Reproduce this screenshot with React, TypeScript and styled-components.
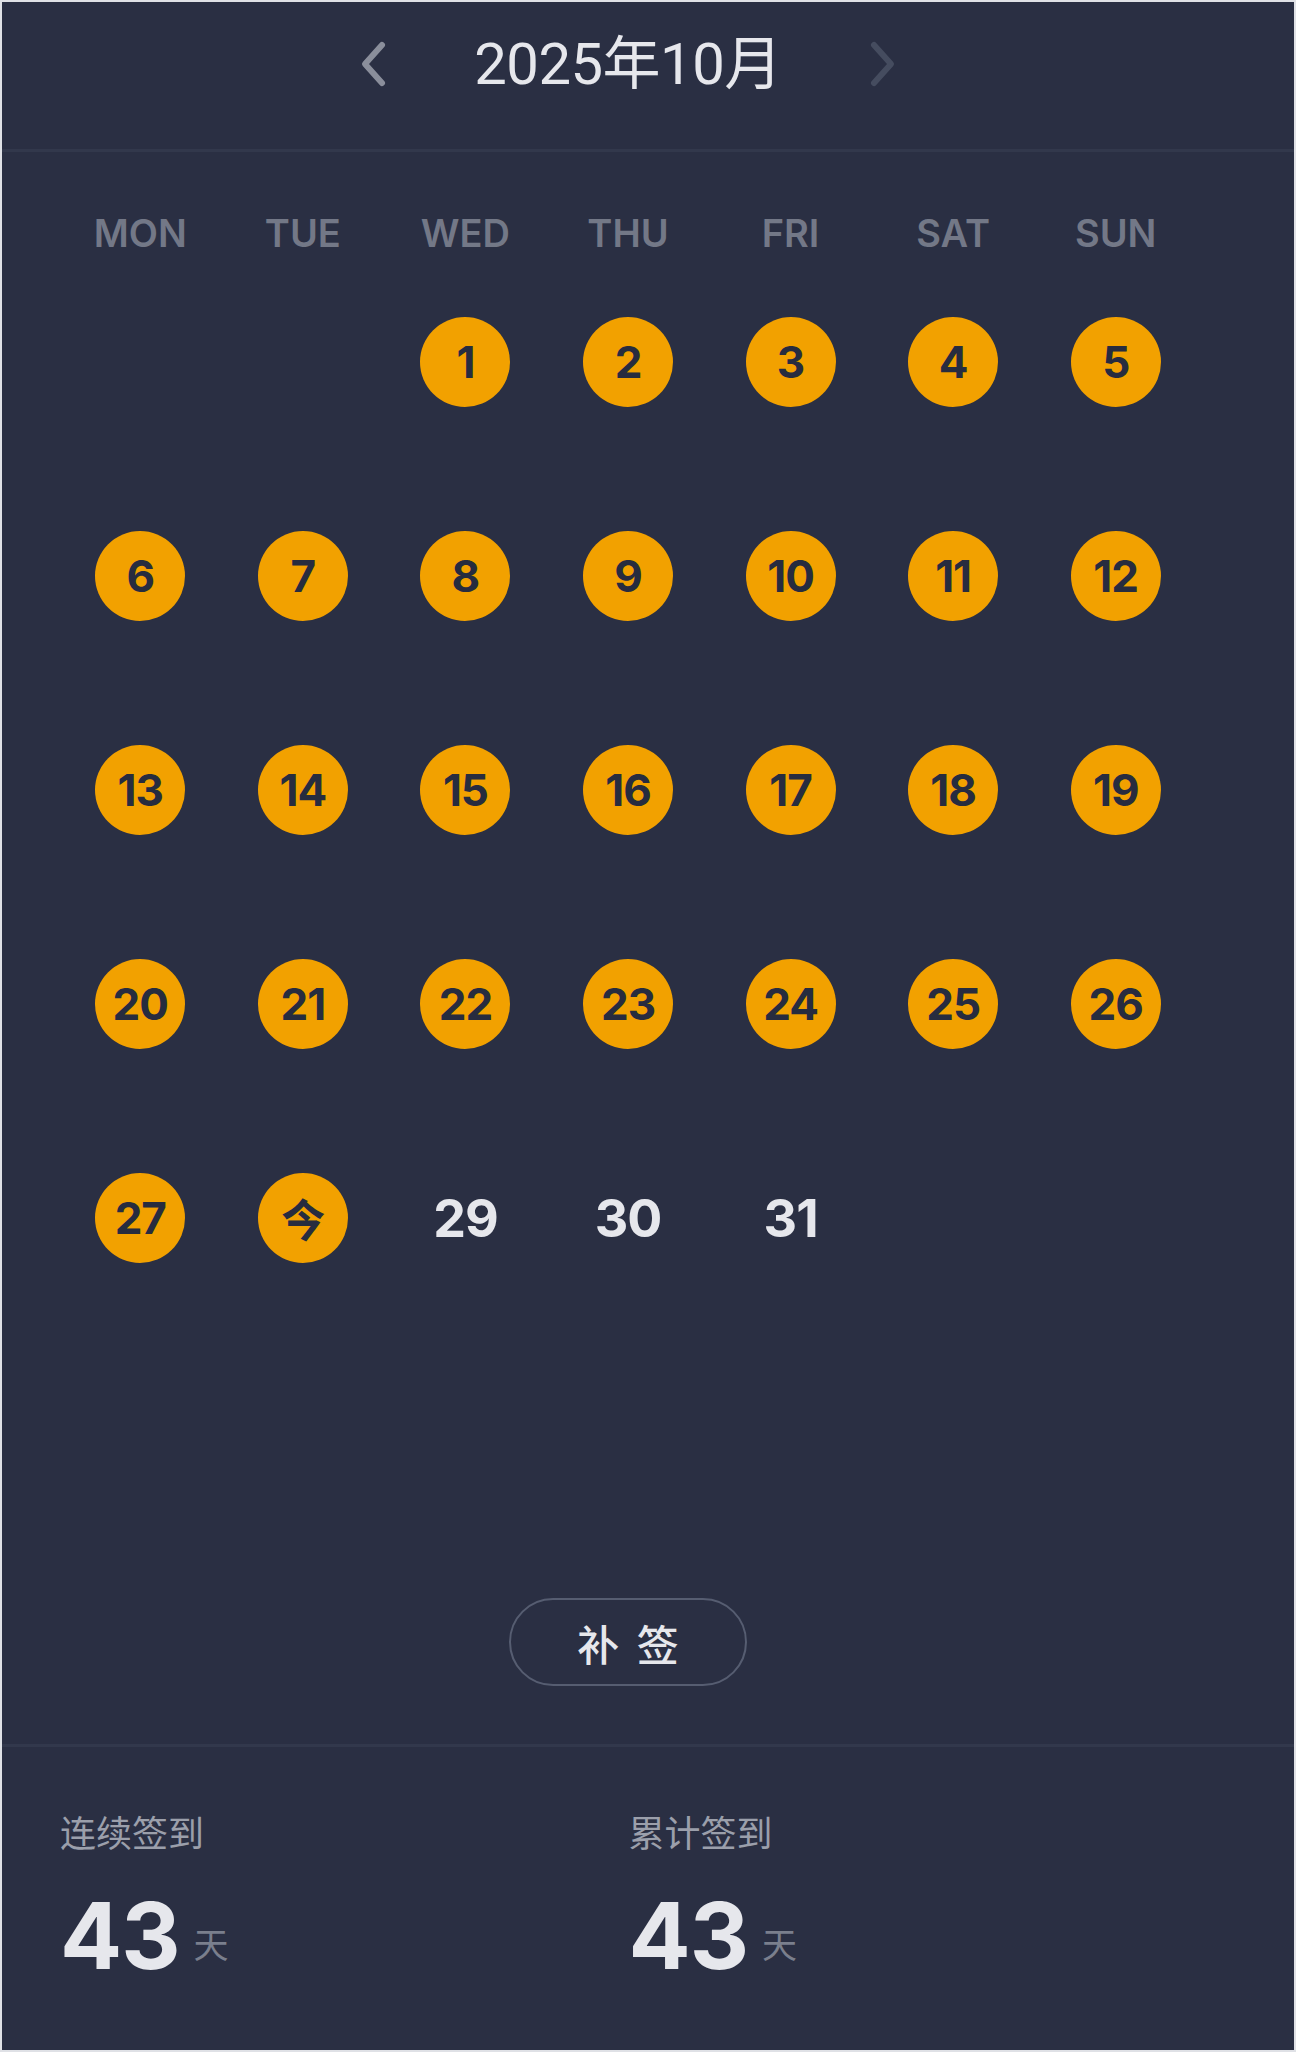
import React from "react";
import styled, { createGlobalStyle } from "styled-components";

const GlobalStyle = createGlobalStyle`
  html, body {
    margin: 0;
    padding: 0;
    background: #e3e5ea;
  }
  body {
    font-family: Inter, "Noto Sans CJK SC", sans-serif;
  }
  * { box-sizing: border-box; }
`;

const Card = styled.div`
  width: 1296px;
  min-height: 2052px;
  border: 2px solid #dfe1e6;
  background: #2a2f43;
  display: flex;
  flex-direction: column;
`;

const Header = styled.header`
  height: 147px;
  display: flex;
  align-items: flex-start;
  justify-content: center;
  gap: 86px;
  padding: 34px 40px 0 0;
`;

const NavButton = styled.button<{ $disabled?: boolean }>`
  width: 30px;
  height: 56px;
  padding: 0;
  border: none;
  background: transparent;
  display: flex;
  align-items: center;
  justify-content: center;
  color: ${(p) => (p.$disabled ? "#454c5f" : "#8a8e9b")};
  cursor: ${(p) => (p.$disabled ? "default" : "pointer")};
`;

const Title = styled.h1`
  margin: 0;
  height: 56px;
  line-height: 56px;
  font-family: Roboto, "Noto Sans CJK SC", sans-serif;
  font-weight: 400;
  font-size: 58px;
  color: #e6e7ec;
  letter-spacing: -0.5px;
`;

const Divider = styled.div`
  height: 3px;
  background: #32384c;
`;

const CalendarBody = styled.section`
  padding: 56px 97px 0 57px;
  display: flex;
  flex-direction: column;
`;

const WeekRow = styled.div`
  display: grid;
  grid-template-columns: repeat(7, 1fr);
  height: 50px;
  align-items: center;
`;

const WeekLabel = styled.div`
  text-align: center;
  font-family: Inter, sans-serif;
  font-weight: 600;
  font-size: 38px;
  color: #737887;
`;

const DayGrid = styled.div`
  margin-top: 59px;
  display: grid;
  grid-template-columns: repeat(7, 1fr);
  grid-auto-rows: 90px;
  row-gap: 124px;
`;

const DayCell = styled.div`
  display: flex;
  align-items: center;
  justify-content: center;
`;

const DayMark = styled.div<{ $checked: boolean }>`
  width: 90px;
  height: 90px;
  border-radius: 50%;
  display: flex;
  align-items: center;
  justify-content: center;
  background: ${(p) => (p.$checked ? "#f2a100" : "transparent")};
  color: ${(p) => (p.$checked ? "#272c3f" : "#e6e7ec")};
  font-family: Inter, "Noto Sans CJK SC", sans-serif;
  font-weight: 700;
  font-size: ${(p) => (p.$checked ? "44px" : "52px")};
  letter-spacing: -1px;
`;

const ButtonRow = styled.div`
  display: flex;
  justify-content: center;
  margin: 335px 0 58px;
`;

const MakeupButton = styled.button`
  width: 238px;
  height: 88px;
  border-radius: 44px;
  border: 2.5px solid #565d71;
  background: transparent;
  color: #e6e7ec;
  font-family: "Noto Sans CJK SC", sans-serif;
  font-size: 42px;
  font-weight: 500;
  letter-spacing: 4px;
  display: flex;
  align-items: center;
  justify-content: center;
  padding: 0 0 0 4px;
`;

const Stats = styled.section`
  display: grid;
  grid-template-columns: 1fr 1fr;
  padding: 60px 97px 0 58px;
`;

const StatBlock = styled.div`
  display: flex;
  flex-direction: column;
`;

const StatLabel = styled.div`
  font-family: "Noto Sans CJK SC", sans-serif;
  font-size: 36px;
  line-height: 48px;
  color: #9b9fab;
`;

const StatValueRow = styled.div`
  margin-top: 35px;
  display: flex;
  align-items: flex-end;
  gap: 14px;
`;

const StatNumber = styled.span`
  font-family: Inter, sans-serif;
  font-weight: 700;
  font-size: 92px;
  line-height: 92px;
  color: #e6e7ec;
  letter-spacing: -1px;
`;

const StatUnit = styled.span`
  font-family: "Noto Sans CJK SC", sans-serif;
  font-size: 35px;
  line-height: 1;
  margin-bottom: 22px;
  color: #7a7f8d;
`;

const Chevron = ({ dir }: { dir: "left" | "right" }) => (
  <svg width="30" height="48" viewBox="0 0 30 48" fill="none">
    <polyline
      points={dir === "left" ? "24,5 7,24 24,43" : "6,5 23,24 6,43"}
      stroke="currentColor"
      strokeWidth="6"
      strokeLinecap="round"
      strokeLinejoin="round"
    />
  </svg>
);

const weekdays = ["MON", "TUE", "WED", "THU", "FRI", "SAT", "SUN"];

type Day = { label: string; checked: boolean } | null;

const days: Day[] = [
  null,
  null,
  ...Array.from({ length: 31 }, (_, i) => {
    const d = i + 1;
    if (d === 28) return { label: "今", checked: true };
    return { label: String(d), checked: d < 28 };
  }),
];

export default function App() {
  return (
    <>
      <GlobalStyle />
      <Card>
        <Header>
          <NavButton aria-label="上一月">
            <Chevron dir="left" />
          </NavButton>
          <Title>2025年10月</Title>
          <NavButton $disabled aria-label="下一月">
            <Chevron dir="right" />
          </NavButton>
        </Header>
        <Divider />
        <CalendarBody>
          <WeekRow>
            {weekdays.map((w) => (
              <WeekLabel key={w}>{w}</WeekLabel>
            ))}
          </WeekRow>
          <DayGrid>
            {days.map((d, i) => (
              <DayCell key={i}>
                {d && <DayMark $checked={d.checked}>{d.label}</DayMark>}
              </DayCell>
            ))}
          </DayGrid>
          <ButtonRow>
            <MakeupButton>补 签</MakeupButton>
          </ButtonRow>
        </CalendarBody>
        <Divider />
        <Stats>
          <StatBlock>
            <StatLabel>连续签到</StatLabel>
            <StatValueRow>
              <StatNumber>43</StatNumber>
              <StatUnit>天</StatUnit>
            </StatValueRow>
          </StatBlock>
          <StatBlock>
            <StatLabel>累计签到</StatLabel>
            <StatValueRow>
              <StatNumber>43</StatNumber>
              <StatUnit>天</StatUnit>
            </StatValueRow>
          </StatBlock>
        </Stats>
      </Card>
    </>
  );
}
